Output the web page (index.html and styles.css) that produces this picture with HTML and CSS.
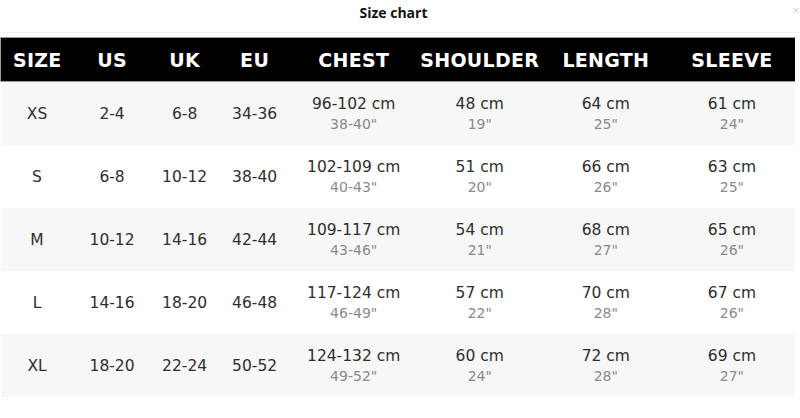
FILE: index.html
```html
<!DOCTYPE html>
<html>
<head>
<meta charset="utf-8">
<link rel="stylesheet" href="styles.css">
</head>
<body>
<div class="modal">
  <div class="title">Size chart<span class="close">×</span></div>
  <table class="chart">
    <colgroup>
      <col class="c-size"><col class="c-us"><col class="c-uk"><col class="c-eu">
      <col class="c-wide"><col class="c-wide"><col class="c-wide"><col class="c-wide">
    </colgroup>
    <thead>
      <tr><th>SIZE</th><th>US</th><th>UK</th><th>EU</th><th>CHEST</th><th>SHOULDER</th><th>LENGTH</th><th>SLEEVE</th></tr>
    </thead>
    <tbody>
      <tr class="alt"><td>XS</td><td>2-4</td><td>6-8</td><td>34-36</td>
        <td><div class="m">96-102 cm</div><div class="s">38-40"</div></td>
        <td><div class="m">48 cm</div><div class="s">19"</div></td>
        <td><div class="m">64 cm</div><div class="s">25"</div></td>
        <td><div class="m">61 cm</div><div class="s">24"</div></td></tr>
      <tr><td>S</td><td>6-8</td><td>10-12</td><td>38-40</td>
        <td><div class="m">102-109 cm</div><div class="s">40-43"</div></td>
        <td><div class="m">51 cm</div><div class="s">20"</div></td>
        <td><div class="m">66 cm</div><div class="s">26"</div></td>
        <td><div class="m">63 cm</div><div class="s">25"</div></td></tr>
      <tr class="alt"><td>M</td><td>10-12</td><td>14-16</td><td>42-44</td>
        <td><div class="m">109-117 cm</div><div class="s">43-46"</div></td>
        <td><div class="m">54 cm</div><div class="s">21"</div></td>
        <td><div class="m">68 cm</div><div class="s">27"</div></td>
        <td><div class="m">65 cm</div><div class="s">26"</div></td></tr>
      <tr><td>L</td><td>14-16</td><td>18-20</td><td>46-48</td>
        <td><div class="m">117-124 cm</div><div class="s">46-49"</div></td>
        <td><div class="m">57 cm</div><div class="s">22"</div></td>
        <td><div class="m">70 cm</div><div class="s">28"</div></td>
        <td><div class="m">67 cm</div><div class="s">26"</div></td></tr>
      <tr class="alt"><td>XL</td><td>18-20</td><td>22-24</td><td>50-52</td>
        <td><div class="m">124-132 cm</div><div class="s">49-52"</div></td>
        <td><div class="m">60 cm</div><div class="s">24"</div></td>
        <td><div class="m">72 cm</div><div class="s">28"</div></td>
        <td><div class="m">69 cm</div><div class="s">27"</div></td></tr>
    </tbody>
  </table>
</div>
</body>
</html>
```
FILE: styles.css
```css
html, body {
  margin: 0;
  padding: 0;
  background: #ffffff;
}
.modal {
  width: 800px;
  height: 418px;
  overflow: hidden;
}
.title {
  position: relative;
  height: 33px;
  box-sizing: border-box;
  padding-top: 3px;
  padding-right: 13px;
  text-align: center;
  font-family: "Open Sans", sans-serif;
  font-weight: 700;
  font-size: 14px;
  color: #111;
  border-bottom: 1px solid #f2f2f2;
}
.close {
  position: absolute;
  right: 0;
  top: 1px;
  font-weight: 400;
  font-size: 13px;
  color: #cfcfcf;
}
.chart {
  margin-top: 4px;
  width: 795px;
  border-collapse: collapse;
  table-layout: fixed;
}
.c-size { width: 73px; }
.c-us { width: 77px; }
.c-uk { width: 68px; }
.c-eu { width: 72px; }
.c-wide { width: 126px; }
.chart th {
  background: #000;
  color: #fff;
  height: 43px;
  padding: 0;
  font-family: "DejaVu Sans", sans-serif;
  font-weight: 700;
  font-size: 19px;
  letter-spacing: 0.3px;
  text-align: center;
  border-top: 1px solid #9a9a9a;
  border-bottom: 1px solid #9a9a9a;
}
.chart th:first-child { border-left: 1px solid #9a9a9a; }
.chart td {
  height: 63px;
  padding: 0;
  text-align: center;
  vertical-align: middle;
  font-family: "DejaVu Sans", sans-serif;
  font-size: 15.5px;
  color: #2e2e2e;
}
.chart tr.alt td { background: #f7f7f7; }
.chart .m { line-height: 20px; }
.chart .s {
  line-height: 20px;
  font-size: 14px;
  color: #8a8a8a;
}
```
